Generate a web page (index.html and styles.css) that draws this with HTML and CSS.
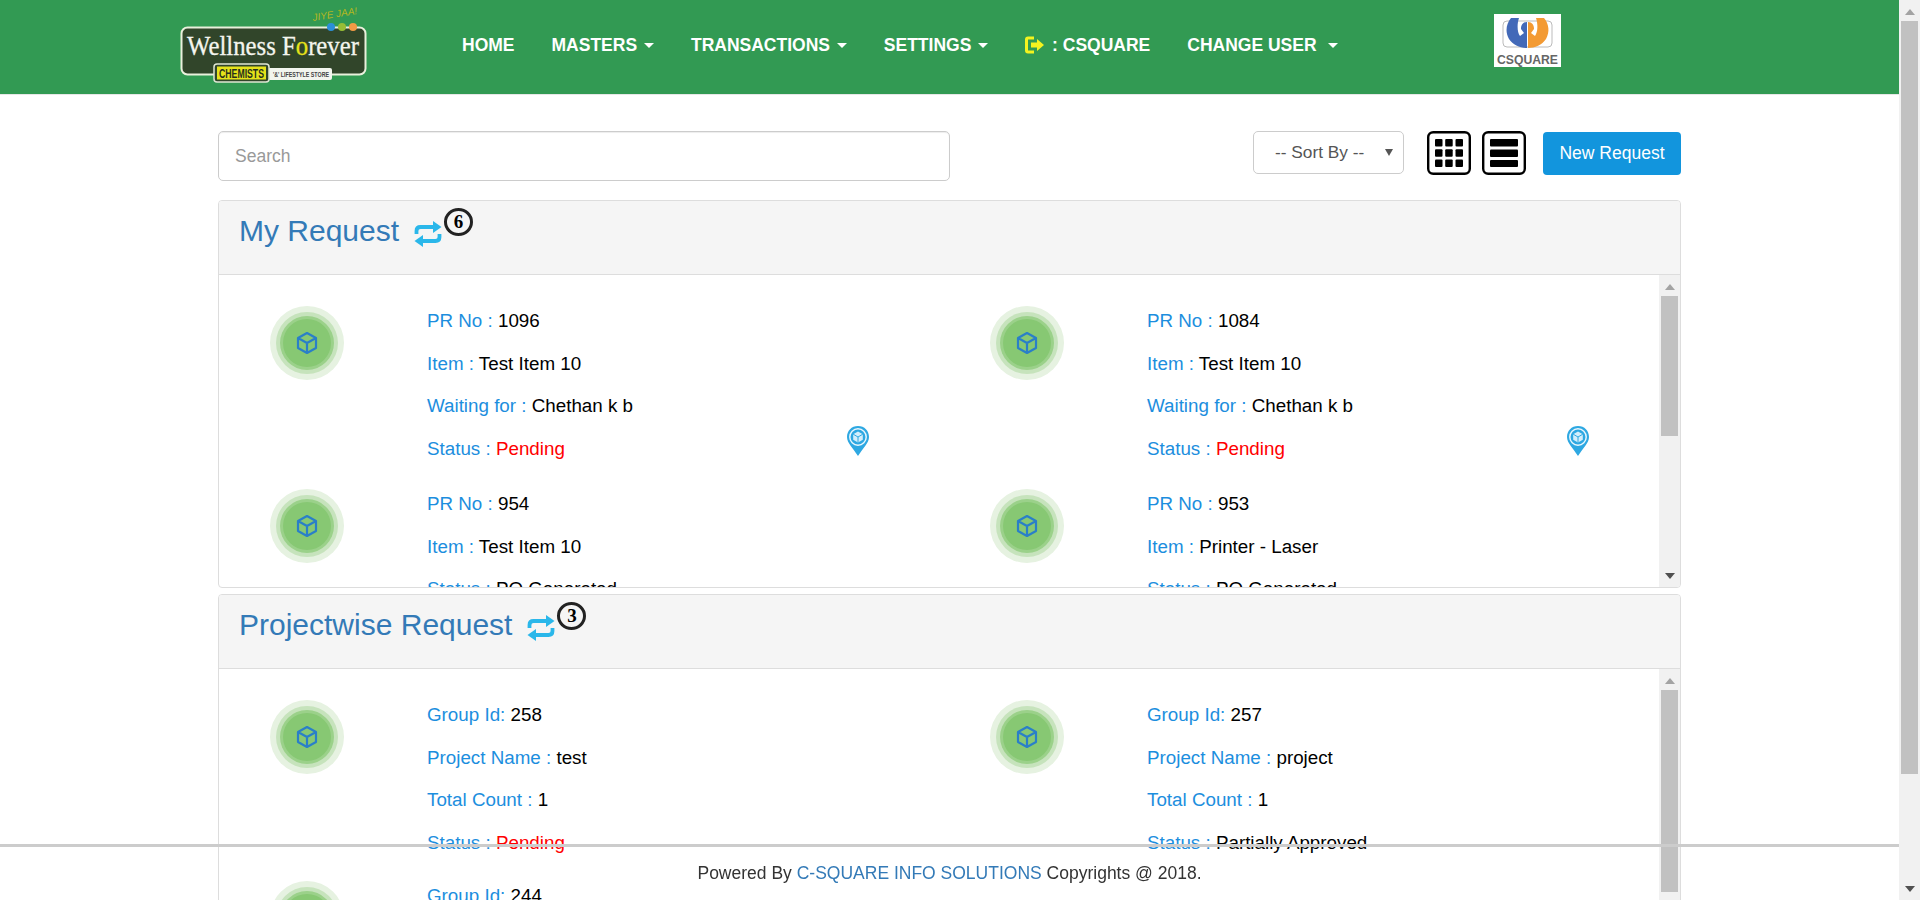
FILE: index.html
```html
<!DOCTYPE html>
<html lang="en">
<head>
    <meta charset="UTF-8">
    <meta name="viewport" content="width=device-width, initial-scale=1.0">
    <title>My Request</title>
    <link rel="stylesheet" href="styles.css">
</head>
<body>
<svg class="sprites" width="0" height="0">
    <symbol id="cube" viewBox="0 0 24 24">
        <path d="M12 2 L21 7 V17 L12 22 L3 17 V7 Z M3 7 L12 12 L21 7 M12 12 V22" fill="none" stroke="currentColor" stroke-width="2.2" stroke-linejoin="round"/>
    </symbol>
    <symbol id="refresh" viewBox="0 0 28 26">
        <path d="M2.5 13 V10 Q2.5 6 6.5 6 H21" fill="none" stroke="currentColor" stroke-width="3.8"/>
        <path d="M19 0 L27.5 6 L19 12 Z" fill="currentColor"/>
        <path d="M25.5 13 V16 Q25.5 20 21.5 20 H7" fill="none" stroke="currentColor" stroke-width="3.8"/>
        <path d="M9 14 L0.5 20 L9 26 Z" fill="currentColor"/>
    </symbol>
    <symbol id="pin" viewBox="0 0 22 30">
        <path d="M11 0 C17.5 0 22 4.8 22 11 C22 17 16 22 11 30 C6 22 0 17 0 11 C0 4.8 4.5 0 11 0 Z" fill="#2ea8e2"/>
        <circle cx="11" cy="11" r="8.2" fill="#2ea8e2" stroke="#e8f6fd" stroke-width="1.5"/>
        <path d="M11 5.5 L15.8 8.2 V13.8 L11 16.5 L6.2 13.8 V8.2 Z" fill="#d5effb"/>
        <path d="M6.2 8.2 L11 11 L15.8 8.2 M11 11 V16.5" fill="none" stroke="#2ea8e2" stroke-width="1"/>
    </symbol>
</svg>

<div class="page">
    <div class="main">
        <header class="topbar">
            <svg class="brand" width="188" height="90" viewBox="0 0 188 90">
                <text x="133" y="21" transform="rotate(-9 133 21)" class="brand-tag">JIYE JAA!</text>
                <rect x="1.5" y="27.5" width="184" height="47" rx="6" fill="#31452a" stroke="#e9f0dc" stroke-width="2"/>
                <circle cx="151" cy="27" r="4" fill="#2b8fd8"/>
                <circle cx="162" cy="27" r="4" fill="#98bd35"/>
                <circle cx="173" cy="27" r="4" fill="#f29a45"/>
                <text x="7" y="55" textLength="172" lengthAdjust="spacingAndGlyphs" class="brand-name">Wellness F<tspan class="brand-o">o</tspan>rever</text>
                <rect x="88" y="68" width="64" height="12" rx="2" fill="#f2f5ee"/>
                <text x="93" y="77" textLength="56" lengthAdjust="spacingAndGlyphs" class="brand-store">'&amp;' LIFESTYLE STORE</text>
                <rect x="34" y="64" width="55" height="18" rx="3" fill="#31452a" stroke="#dfe6d4" stroke-width="1.5"/>
                <rect x="37" y="66.5" width="49" height="13" fill="#e6e21a"/>
                <text x="39" y="77.5" textLength="45" lengthAdjust="spacingAndGlyphs" class="brand-chem">CHEMISTS</text>
            </svg>
            <nav class="nav">
                <a href="#">HOME</a>
                <a href="#">MASTERS <i class="caret"></i></a>
                <a href="#">TRANSACTIONS <i class="caret"></i></a>
                <a href="#">SETTINGS <i class="caret"></i></a>
                <a href="#">
                    <svg class="logout" width="20" height="18" viewBox="0 0 20 18">
                        <path d="M9 2 H3 Q1.5 2 1.5 3.5 V14.5 Q1.5 16 3 16 H9" fill="none" stroke="#f4f31f" stroke-width="3"/>
                        <path d="M6 6.5 H12 V3 L19 9 L12 15 V11.5 H6 Z" fill="#f4f31f"/>
                    </svg>
                    : CSQUARE
                </a>
                <a href="#">CHANGE USER &nbsp;<i class="caret"></i></a>
            </nav>
            <svg class="client-logo" width="67" height="53" viewBox="0 0 67 53">
                <rect width="67" height="53" fill="#fff"/>
                <rect x="9" y="7" width="49" height="26" rx="4" fill="none" stroke="#bbb" stroke-width="1"/>
                <path d="M17 4 C12 10 11 18 15 25 C19 31 26 34 33 34 V8 C29 8 27 11 27 15 L30 19 L26 22 C23 18 23 10 25 4 Z" fill="#4369b8"/>
                <path d="M50 4 C55 10 56 18 52 25 C48 31 41 34 34 34 V8 C38 8 40 11 40 15 L37 19 L41 22 C44 18 44 10 42 4 Z" fill="#f39a33"/>
                <text x="3" y="50" textLength="61" lengthAdjust="spacingAndGlyphs" class="client-name">CSQUARE</text>
            </svg>
        </header>

        <div class="container">
            <div class="toolbar">
                <input class="search" type="text" placeholder="Search">
                <div class="sort"><span>-- Sort By --</span><i class="sort-arrow"></i></div>
                <svg class="view-btn view-grid" width="44" height="44" viewBox="0 0 44 44">
                    <rect x="1.2" y="1.2" width="41.6" height="41.6" rx="5" fill="#fff" stroke="#000" stroke-width="2.4"/>
                    <g fill="#000">
                        <rect x="8" y="8" width="7.5" height="7.5" rx="1"/><rect x="18.2" y="8" width="7.5" height="7.5" rx="1"/><rect x="28.5" y="8" width="7.5" height="7.5" rx="1"/>
                        <rect x="8" y="18.2" width="7.5" height="7.5" rx="1"/><rect x="18.2" y="18.2" width="7.5" height="7.5" rx="1"/><rect x="28.5" y="18.2" width="7.5" height="7.5" rx="1"/>
                        <rect x="8" y="28.5" width="7.5" height="7.5" rx="1"/><rect x="18.2" y="28.5" width="7.5" height="7.5" rx="1"/><rect x="28.5" y="28.5" width="7.5" height="7.5" rx="1"/>
                    </g>
                </svg>
                <svg class="view-btn view-list" width="44" height="44" viewBox="0 0 44 44">
                    <rect x="1.2" y="1.2" width="41.6" height="41.6" rx="5" fill="#fff" stroke="#000" stroke-width="2.4"/>
                    <g fill="#000">
                        <rect x="8" y="8" width="28" height="7.5" rx="1"/><rect x="8" y="18.5" width="28" height="7.5" rx="1"/><rect x="8" y="29" width="28" height="7" rx="1"/>
                    </g>
                </svg>
                <button class="new-btn">New Request</button>
            </div>

            <section class="panel">
                <div class="panel-head">
                    <h3>My Request</h3>
                    <svg class="refresh" width="28" height="26"><use href="#refresh"/></svg>
                    <span class="count">6</span>
                </div>
                <div class="panel-body">
                    <div class="cards">
                        <div class="card">
                            <div class="disc"><svg width="24" height="24"><use href="#cube"/></svg></div>
                            <div>
                                <p><span class="lbl">PR No : </span>1096</p>
                                <p><span class="lbl">Item : </span>Test Item 10</p>
                                <p><span class="lbl">Waiting for : </span>Chethan k b</p>
                                <p><span class="lbl">Status : </span><span class="pending">Pending</span></p>
                            </div>
                            <svg class="pin" width="22" height="30"><use href="#pin"/></svg>
                        </div>
                        <div class="card">
                            <div class="disc"><svg width="24" height="24"><use href="#cube"/></svg></div>
                            <div>
                                <p><span class="lbl">PR No : </span>1084</p>
                                <p><span class="lbl">Item : </span>Test Item 10</p>
                                <p><span class="lbl">Waiting for : </span>Chethan k b</p>
                                <p><span class="lbl">Status : </span><span class="pending">Pending</span></p>
                            </div>
                            <svg class="pin" width="22" height="30"><use href="#pin"/></svg>
                        </div>
                        <div class="card">
                            <div class="disc"><svg width="24" height="24"><use href="#cube"/></svg></div>
                            <div>
                                <p><span class="lbl">PR No : </span>954</p>
                                <p><span class="lbl">Item : </span>Test Item 10</p>
                                <p><span class="lbl">Status : </span>PO Generated</p>
                            </div>
                        </div>
                        <div class="card">
                            <div class="disc"><svg width="24" height="24"><use href="#cube"/></svg></div>
                            <div>
                                <p><span class="lbl">PR No : </span>953</p>
                                <p><span class="lbl">Item : </span>Printer - Laser</p>
                                <p><span class="lbl">Status : </span>PO Generated</p>
                            </div>
                        </div>
                    </div>
                    <div class="bar"><i class="up"></i><b class="thumb"></b><i class="down"></i></div>
                </div>
            </section>

            <section class="panel">
                <div class="panel-head">
                    <h3>Projectwise Request</h3>
                    <svg class="refresh" width="28" height="26"><use href="#refresh"/></svg>
                    <span class="count">3</span>
                </div>
                <div class="panel-body">
                    <div class="cards cards-project">
                        <div class="card">
                            <div class="disc"><svg width="24" height="24"><use href="#cube"/></svg></div>
                            <div>
                                <p><span class="lbl">Group Id: </span>258</p>
                                <p><span class="lbl">Project Name : </span>test</p>
                                <p><span class="lbl">Total Count : </span>1</p>
                                <p><span class="lbl">Status : </span><span class="pending">Pending</span></p>
                            </div>
                        </div>
                        <div class="card">
                            <div class="disc"><svg width="24" height="24"><use href="#cube"/></svg></div>
                            <div>
                                <p><span class="lbl">Group Id: </span>257</p>
                                <p><span class="lbl">Project Name : </span>project</p>
                                <p><span class="lbl">Total Count : </span>1</p>
                                <p><span class="lbl">Status : </span>Partially Approved</p>
                            </div>
                        </div>
                        <div class="card">
                            <div class="disc"><svg width="24" height="24"><use href="#cube"/></svg></div>
                            <div>
                                <p><span class="lbl">Group Id: </span>244</p>
                            </div>
                        </div>
                    </div>
                    <div class="bar"><i class="up"></i><b class="thumb thumb-long"></b><i class="down"></i></div>
                </div>
            </section>
        </div>
    </div>
    <div class="bar"><i class="up"></i><b class="thumb thumb-page"></b><i class="down"></i></div>
</div>

<footer class="footer">Powered By <a href="#">C-SQUARE INFO SOLUTIONS</a> Copyrights @ 2018.</footer>
</body>
</html>
```

FILE: styles.css
```css
html, body {
    margin: 0;
    height: 100%;
    overflow: hidden;
    background: #fff;
    font-family: "Liberation Sans", Arial, sans-serif;
    color: #000;
}
a {
    text-decoration: none;
}
.sprites {
    position: absolute;
}
.page {
    display: flex;
    height: 900px;
}
.main {
    flex: 1;
    min-width: 0;
    overflow: hidden;
}

/* top green bar */
.topbar {
    display: flex;
    align-items: flex-start;
    height: 94px;
    padding-left: 180px;
    background: #329a53;
    border-bottom: 1px solid #e7e7e7;
}
.brand {
    flex: none;
    margin-right: 94px;
}
.brand-tag {
    font: italic 10px "Liberation Sans", sans-serif;
    fill: #b7b81e;
}
.brand-name {
    font: 27px "Liberation Serif", serif;
    fill: #f4f5ee;
    stroke: #f4f5ee;
    stroke-width: .3px;
}
.brand-o {
    fill: #e6e21a;
    stroke: #e6e21a;
}
.brand-store {
    font: bold 7px "Liberation Sans", sans-serif;
    fill: #444;
}
.brand-chem {
    font: bold 13px "Liberation Sans", sans-serif;
    fill: #26301c;
}
.nav {
    display: flex;
    gap: 37px;
    height: 90px;
    align-items: center;
}
.nav a {
    color: #fff;
    font-size: 17.5px;
    font-weight: bold;
    white-space: nowrap;
}
.caret {
    display: inline-block;
    vertical-align: middle;
    margin-left: 2px;
    border-top: 5px solid #fff;
    border-left: 5px solid transparent;
    border-right: 5px solid transparent;
}
.logout {
    vertical-align: -3px;
    margin-right: 2px;
}
.client-logo {
    flex: none;
    margin: 14px 338px 0 auto;
}
.client-name {
    font: bold 13px "Liberation Sans", sans-serif;
    fill: #666;
}

.container {
    width: 1463px;
    margin: 0 auto;
}
.toolbar {
    display: flex;
    align-items: flex-start;
    padding-top: 36px;
    height: 69px;
}
.search {
    box-sizing: border-box;
    width: 732px;
    height: 50px;
    padding: 0 16px;
    border: 1px solid #ccc;
    border-radius: 5px;
    font: 17.5px "Liberation Sans", sans-serif;
    box-shadow: inset 0 1px 1px rgba(0, 0, 0, .075);
}
.search::placeholder {
    color: #999;
}
.sort {
    box-sizing: border-box;
    display: flex;
    align-items: center;
    justify-content: space-between;
    width: 151px;
    height: 43px;
    margin-left: 303px;
    padding: 0 10px 0 21px;
    border: 1px solid #ccc;
    border-radius: 5px;
    font-size: 17.3px;
    color: #555;
}
.sort-arrow {
    border-top: 7px solid #555;
    border-left: 4px solid transparent;
    border-right: 4px solid transparent;
}
.view-grid {
    margin-left: 23px;
}
.view-list {
    margin-left: 11px;
}
.new-btn {
    width: 138px;
    height: 43px;
    margin: 1px 0 0 17px;
    border: 0;
    border-radius: 4px;
    background: #1295dd;
    color: #fff;
    font: 17.5px "Liberation Sans", sans-serif;
}

/* panels */
.panel {
    margin-bottom: 6px;
    border: 1px solid #ddd;
    border-radius: 4px;
    overflow: hidden;
}
.panel-head {
    display: flex;
    align-items: flex-start;
    box-sizing: border-box;
    height: 74px;
    padding: 7px 0 0 20px;
    background: #f5f5f5;
    border-bottom: 1px solid #ddd;
}
.panel-head h3 {
    margin: 6px 0 0;
    font-size: 30px;
    font-weight: normal;
    line-height: 33px;
    color: #337ab7;
}
.refresh {
    margin: 13px 0 0 15px;
    color: #2ab7ea;
}
.count {
    box-sizing: border-box;
    width: 29px;
    height: 28px;
    margin-left: 2px;
    border: 3.5px solid #222;
    border-radius: 50%;
    font: bold 19px/21px "Liberation Serif", serif;
    text-align: center;
}
.panel-body {
    display: flex;
    height: 312px;
}
.cards {
    flex: 1;
    display: grid;
    grid-template-columns: 720px 720px;
    grid-auto-rows: 183px;
    overflow: hidden;
}
.cards-project {
    grid-auto-rows: 181px;
}
.card {
    position: relative;
    display: grid;
    grid-template-columns: 176px 1fr;
    column-gap: 32px;
    padding-top: 33px;
}
.card p {
    margin: 0 0 17px;
    font-size: 18.8px;
    line-height: 25.5px;
}
.lbl {
    color: #1c8ede;
}
.pending {
    color: #f00;
}
.disc {
    display: flex;
    align-items: center;
    justify-content: center;
    justify-self: center;
    width: 48px;
    height: 48px;
    margin-top: 11px;
    border-radius: 50%;
    background: #87c873;
    color: #2a7fc8;
    box-shadow: 0 0 0 3px #9bd18a, 0 0 0 7px #c6e3bc, 0 0 0 13px #e6f2e1;
}
.pin {
    position: absolute;
    left: 628px;
    top: 151px;
}

/* scrollbars, drawn so they show in the picture */
.bar {
    flex: none;
    display: flex;
    flex-direction: column;
    align-items: center;
    width: 21px;
    background: #f1f1f1;
}
.bar .up {
    margin: 9px 0 6px;
    border-bottom: 6px solid #a3a3a3;
    border-left: 5px solid transparent;
    border-right: 5px solid transparent;
}
.bar .down {
    margin-top: auto;
    margin-bottom: 8px;
    border-top: 6px solid #505050;
    border-left: 5px solid transparent;
    border-right: 5px solid transparent;
}
.thumb {
    flex: none;
    width: 17px;
    height: 140px;
    background: #c1c1c1;
}
.thumb-long {
    height: 202px;
}
.thumb-page {
    height: 753px;
}

/* footer lies over the page, no background */
.footer {
    position: fixed;
    left: 0;
    right: 21px;
    bottom: 0;
    box-sizing: border-box;
    height: 56px;
    padding-top: 16px;
    border-top: 3px solid #ccc;
    font-size: 17.5px;
    line-height: 20px;
    text-align: center;
    color: #333;
}
.footer a {
    color: #337ab7;
}
```
